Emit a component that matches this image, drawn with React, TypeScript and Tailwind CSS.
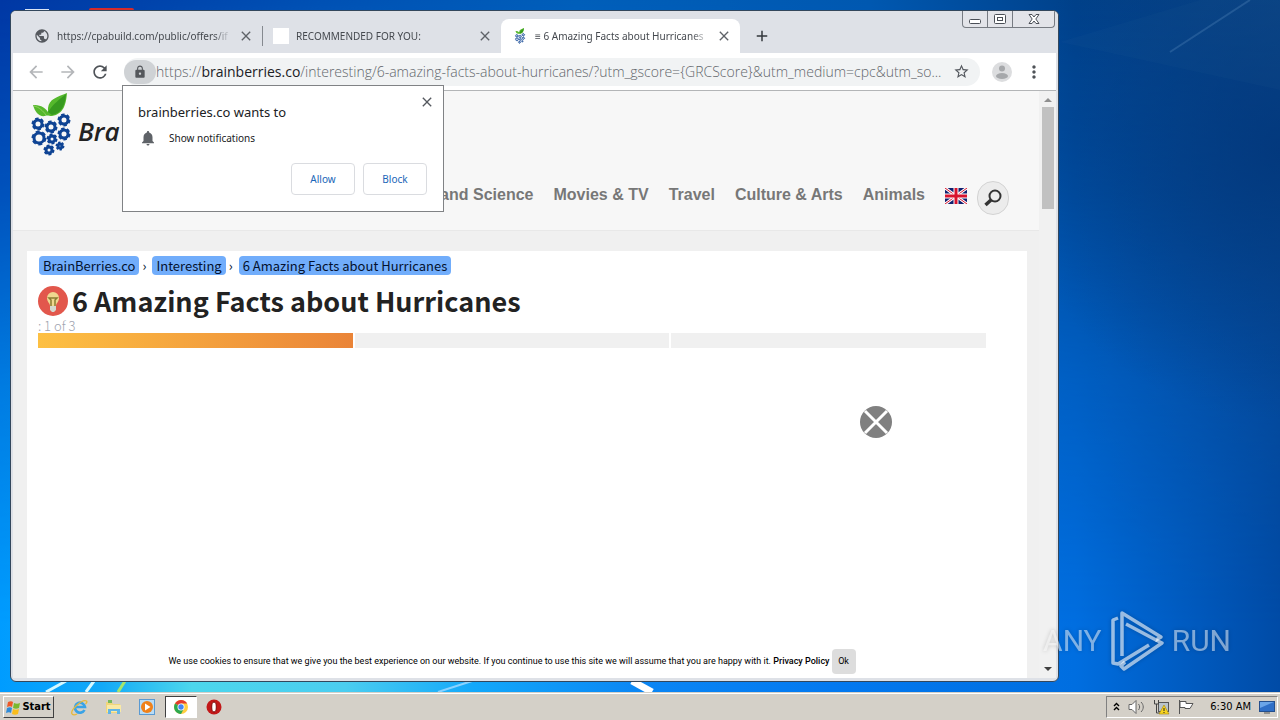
import type { ReactNode } from "react";
import {
  MdAdd,
  MdArrowBack,
  MdArrowForward,
  MdClose,
  MdLock,
  MdMoreVert,
  MdNotifications,
  MdPublic,
  MdRefresh,
  MdStarBorder,
} from "react-icons/md";

const gears = [
  { x: 8, y: 31, r: 5 },
  { x: 21, y: 34, r: 5 },
  { x: 34, y: 27, r: 5 },
  { x: 9, y: 45, r: 6 },
  { x: 34, y: 41, r: 5 },
  { x: 22, y: 46, r: 4 },
  { x: 19, y: 57, r: 4 },
  { x: 30, y: 53, r: 3 },
];

const navItems = ["and Science", "Movies & TV", "Travel", "Culture & Arts", "Animals"];
const crumbs = ["BrainBerries.co", "Interesting", "6 Amazing Facts about Hurricanes"];

function Berry({ className }: { className?: string }) {
  return (
    <svg viewBox="0 0 42 64" className={className} aria-hidden="true">
      <path d="M18 15C19 6 27 4 37 0c-1 11-3 21-15 23-3 0-5-1-7 0C9 24 5 19 3 12c6 0 11 1 15 7Z" fill="#55b82c" />
      <path d="M18 19C23 11 30 6 36 1c-1 11-4 19-14 21Z" fill="#379a1f" />
      <path d="M4 13c5 1 9 5 12 9" stroke="#8fd05c" strokeWidth="1" fill="none" />
      {gears.map((g) => (
        <g key={`${g.x}-${g.y}`} fill="none" stroke="#0f4494">
          <circle cx={g.x} cy={g.y} r={g.r - 1} strokeWidth="3" />
          <circle cx={g.x} cy={g.y} r={g.r + 0.5} strokeWidth="2" pathLength="60" strokeDasharray="6 4" />
        </g>
      ))}
    </svg>
  );
}

function Wallpaper() {
  return (
    <svg viewBox="0 0 1280 692" preserveAspectRatio="none" className="absolute inset-0 size-full" aria-hidden="true">
      <defs>
        <linearGradient id="low">
          <stop offset="0" stopColor="#009cff" />
          <stop offset="0.08" stopColor="#12a9f8" />
          <stop offset="0.15" stopColor="#4cd6ec" />
          <stop offset="0.27" stopColor="#4bcdf0" />
          <stop offset="0.37" stopColor="#13a8fa" />
          <stop offset="0.5" stopColor="#0b86f4" />
          <stop offset="0.65" stopColor="#0379f0" />
          <stop offset="0.84" stopColor="#006ee0" />
          <stop offset="1" stopColor="#004ba6" />
        </linearGradient>
        <linearGradient id="high">
          <stop offset="0" stopColor="#0037a4" />
          <stop offset="0.25" stopColor="#0050b4" />
          <stop offset="0.45" stopColor="#005eba" />
          <stop offset="0.68" stopColor="#0058b0" />
          <stop offset="0.84" stopColor="#00418a" />
          <stop offset="1" stopColor="#0c4788" />
        </linearGradient>
        <linearGradient id="fade" x2="0" y2="1">
          <stop offset="0" stopColor="#fff" />
          <stop offset="0.28" stopColor="#bbb" />
          <stop offset="0.55" stopColor="#555" />
          <stop offset="0.9" stopColor="#000" />
        </linearGradient>
        <mask id="sky">
          <path d="M0 0h1280v692H0z" fill="url(#fade)" />
        </mask>
        <radialGradient id="dim" cx="1280" cy="150" r="270" gradientUnits="userSpaceOnUse">
          <stop offset="0" stopColor="#003478" stopOpacity="0.75" />
          <stop offset="1" stopColor="#003478" stopOpacity="0" />
        </radialGradient>
      </defs>
      <path d="M0 0h1280v692H0z" fill="url(#low)" />
      <path d="M0 0h1280v692H0z" fill="url(#high)" mask="url(#sky)" />
      <path d="M1000 0h280v450h-280z" fill="url(#dim)" />
      <path d="m1170 52 80-52" stroke="#6f9ecb" strokeOpacity="0.25" strokeWidth="2" />
      <path d="M1060 42 1200 0h80v90Z" fill="#5b8fb8" fillOpacity="0.04" />
      <path d="m46 692 20-11M86 692l8-11" stroke="#d5f8ff" strokeWidth="3" />
      <path d="m118 692 7-11" stroke="#a5e66c" strokeWidth="3" />
      <path d="m438 692 34-11" stroke="#8ad2ff" strokeWidth="2" />
      <path d="m632 681 20 11" stroke="#fff" strokeWidth="7" />
      <path d="M25 9.500h24" stroke="#dce6f5" strokeWidth="1" />
      <rect x="89" y="8" width="45" height="8" rx="2" fill="#d52b2b" />
    </svg>
  );
}

function Tab({ icon, title, active }: { icon: ReactNode; title: string; active?: boolean }) {
  return (
    <div
      className={
        active
          ? "flex w-[239px] items-center gap-[7px] rounded-t-lg bg-white pr-2 pl-[11px]"
          : "flex w-[239px] items-center gap-[7px] pr-2 pl-[11px]"
      }
    >
      {icon}
      <span className="flex-1 overflow-hidden mask-r-from-90% text-[10px] whitespace-nowrap text-[#45494f]">{title}</span>
      <button aria-label="Close tab" className="text-[#5f6368]">
        <MdClose size={16} />
      </button>
    </div>
  );
}

function WindowControls() {
  return (
    <div className="flex h-[17px] divide-x divide-[#777b82] rounded-b border border-t-0 border-[#777b82] bg-[#e3e4e9]">
      <button aria-label="Minimize" className="flex w-[25px] items-center justify-center">
        <svg width="12" height="12" viewBox="0 0 12 12">
          <rect x="0.5" y="6.5" width="11" height="4" rx="1" fill="#fff" stroke="#4b4f57" />
        </svg>
      </button>
      <button aria-label="Maximize" className="flex w-[25px] items-center justify-center">
        <svg width="12" height="12" viewBox="0 0 12 12" fill="#fff" stroke="#4b4f57">
          <rect x="0.5" y="1.5" width="11" height="9" rx="1" />
          <rect x="3.5" y="4.5" width="5" height="3" />
        </svg>
      </button>
      <button aria-label="Close" className="flex w-[41px] items-center justify-center">
        <svg width="12" height="12" viewBox="0 0 12 12">
          <path
            d="M1 1.5h3L6 4l2-2.500h3L7.800 6 11 10.500H8L6 8l-2 2.500H1L4.200 6Z"
            fill="#fff"
            stroke="#4b4f57"
          />
        </svg>
      </button>
    </div>
  );
}

function TabStrip() {
  return (
    <div className="flex h-[42px] justify-between bg-[#dee1e7] pr-[3px]">
      <div className="flex pt-2 pl-3">
        <Tab icon={<MdPublic size={16} className="shrink-0 text-[#55595f]" />} title="https://cpabuild.com/public/offers/if" />
        <div className="relative flex">
          <span className="absolute top-[7px] h-5 w-px bg-[#85898f]" />
          <Tab icon={<span className="size-4 shrink-0 bg-white" />} title="RECOMMENDED FOR YOU:" />
        </div>
        <Tab
          active
          icon={<Berry className="h-4 w-4 shrink-0" />}
          title="≡ 6 Amazing Facts about Hurricanes"
        />
        <button aria-label="New tab" className="ml-[13px] text-[#33373c]">
          <MdAdd size={18} />
        </button>
      </div>
      <WindowControls />
    </div>
  );
}

function Toolbar() {
  return (
    <div className="flex h-[38px] items-center border-b border-[#b3b5b7] bg-white pr-3 pl-[13px]">
      <div className="flex gap-3 pr-[14px] text-[#b4b6b9]">
        <button aria-label="Back">
          <MdArrowBack size={20} />
        </button>
        <button aria-label="Forward">
          <MdArrowForward size={20} />
        </button>
        <button aria-label="Reload" className="text-[#4f5358]">
          <MdRefresh size={20} />
        </button>
      </div>
      <div className="flex h-7 min-w-0 flex-1 items-center rounded-full bg-[#f1f3f4]">
        <button aria-label="Site information" className="flex h-6 w-8 shrink-0 items-center justify-center rounded-full bg-[#cfd2d5] text-[#55585c]">
          <MdLock size={14} />
        </button>
        <span className="flex-1 truncate font-['Open_Sans','Noto_Sans',sans-serif] text-[14px] font-light text-[#62666b]">
          https://<span className="font-normal text-[#202124]">brainberries.co</span>
          /interesting/6-amazing-facts-about-hurricanes/?utm_gscore={"{GRCScore}"}&amp;utm_medium=cpc&amp;utm_so...
        </span>
        <button aria-label="Bookmark this page" className="px-[10px] text-[#55595f]">
          <MdStarBorder size={17} />
        </button>
      </div>
      <button aria-label="Profile" className="ml-3">
        <svg width="20" height="20" viewBox="0 0 20 20">
          <circle cx="10" cy="10" r="10" fill="#dcdddf" />
          <circle cx="10" cy="6.500" r="3" fill="#a6a8ab" />
          <ellipse cx="10" cy="14" rx="6" ry="3" fill="#a6a8ab" />
        </svg>
      </button>
      <button aria-label="Menu" className="ml-3 text-[#4f5358]">
        <MdMoreVert size={20} />
      </button>
    </div>
  );
}

function PermissionPrompt() {
  return (
    <div
      role="dialog"
      aria-label="Notification permission"
      className="absolute top-[74px] left-[111px] w-[322px] border border-[#808285] bg-white px-4 pt-4 pb-4 text-[#202124]"
    >
      <button aria-label="Dismiss" className="absolute top-2 right-2 text-[#55595f]">
        <MdClose size={16} />
      </button>
      <p className="-ml-px text-[13px] leading-5">brainberries.co wants to</p>
      <p className="mt-1 flex items-center gap-3 text-[10px] leading-6">
        <MdNotifications size={18} className="text-[#5f6368]" />
        Show notifications
      </p>
      <div className="mt-[13px] flex justify-end gap-2 text-[10px] text-[#1a66b8]">
        <button className="h-8 w-16 rounded border border-[#dadce0]">Allow</button>
        <button className="h-8 w-16 rounded border border-[#dadce0]">Block</button>
      </div>
    </div>
  );
}

function Flag() {
  return (
    <svg width="22" height="16" viewBox="0 0 22 16" aria-label="English">
      <path d="M0 0h22v16H0z" fill="#10206f" />
      <path d="m0 0 22 16M22 0 0 16" stroke="#fff" strokeWidth="3" />
      <path d="m0 0 22 16M22 0 0 16" stroke="#d8142e" strokeWidth="1" />
      <path d="M11 0v16M0 8h22" stroke="#fff" strokeWidth="5" />
      <path d="M11 0v16M0 8h22" stroke="#d8142e" strokeWidth="3" />
    </svg>
  );
}

function SiteHeader() {
  return (
    <header className="flex h-[140px] flex-col justify-between border-b border-[#e8e8e8] bg-[#f7f7f7] pr-[30px] pb-[15px] pl-[17px]">
      <a href="#home" className="flex items-center gap-1.5 pt-0.5">
        <Berry className="h-16 w-[42px]" />
        <span className="pt-3 font-['Open_Sans','Noto_Sans',sans-serif] text-[26px] font-semibold text-[#222] italic">Bra</span>
      </a>
      <nav className="flex justify-end gap-5 font-['Liberation_Sans',Arial,sans-serif] text-[16px] leading-7 font-bold whitespace-nowrap text-[#777]">
        {navItems.map((item) => (
          <a key={item} href="#nav">
            {item}
          </a>
        ))}
        <div className="flex gap-[10px]">
          <a href="#english" className="flex h-[30px] items-center">
            <Flag />
          </a>
          <button aria-label="Search" className="flex h-[34px] w-8 items-center justify-center rounded-full border border-[#d3d3d3] bg-[#ececec]">
            <svg width="18" height="18" viewBox="0 0 18 18" fill="none" stroke="#333">
              <circle cx="11" cy="7" r="5.500" strokeWidth="2" />
              <path d="m7 11-5.500 5" strokeWidth="3.500" />
            </svg>
          </button>
        </div>
      </nav>
    </header>
  );
}

function Article() {
  return (
    <main className="mt-5 mr-3 ml-[14px] flex flex-1 flex-col bg-white pt-[5px] pl-[11px]">
      <div className="flex gap-[3px] pl-px font-['Noto_Sans_CJK_SC',sans-serif] text-[13px] leading-[19px] text-[#04122e]">
        {crumbs.map((crumb, i) => (
          <div key={crumb} className="flex gap-[3px]">
            {i > 0 && <span className="w-[7px]">›</span>}
            <a href="#crumb" className="rounded-sm bg-[#71adfb] px-1">
              {crumb}
            </a>
          </div>
        ))}
      </div>
      <h1 className="mt-2 flex items-center gap-1 font-['Noto_Sans_CJK_SC',sans-serif] text-[27px] leading-9 font-bold text-[#222]">
        <svg width="30" height="30" viewBox="0 0 30 30" aria-hidden="true">
          <circle cx="15" cy="15" r="15" fill="#e2574c" />
          <path d="M9 12a6 6 0 0 1 12 0c0 4-3 5-3 8h-6c0-3-3-4-3-8Z" fill="#efd78f" />
          <path d="M13 20v-6l-2-2h8l-2 2v6" fill="none" stroke="#8a7c33" strokeWidth="1.500" />
          <path d="M12 20h6v4l-2 2h-2l-2-2Z" fill="#d5d8d0" />
        </svg>
        6 Amazing Facts about Hurricanes
      </h1>
      <p className="font-['Noto_Sans_CJK_SC',sans-serif] text-[13px] leading-[14px] font-light text-[#a0a4b0]">: 1 of 3</p>
      <div className="mr-[41px] flex h-[15px] gap-0.5">
        <div className="flex-1 bg-linear-to-r from-[#fdc043] to-[#ea8438]" />
        <div className="flex-1 bg-[#f0f0f0]" />
        <div className="flex-1 bg-[#f0f0f0]" />
      </div>
      <div className="mt-[58px] mr-[135px] flex justify-end">
        <button aria-label="Close advertisement">
          <svg width="32" height="32" viewBox="0 0 32 32">
            <circle cx="16" cy="16" r="16" fill="#808080" />
            <path d="m5 5 22 22M27 5 5 27" stroke="#fff" strokeWidth="3" />
          </svg>
        </button>
      </div>
      <div className="mt-auto mr-[41px] flex items-center justify-center gap-0.5 pb-1 font-['Roboto','Noto_Sans',sans-serif] text-[9px] text-black">
        <span>
          We use cookies to ensure that we give you the best experience on our website. If you continue to use this site we will assume
          that you are happy with it.{" "}
          <a href="#privacy" className="font-medium">
            Privacy Policy
          </a>
        </span>
        <button className="h-[25px] w-6 rounded-sm bg-[#ddd]">Ok</button>
      </div>
    </main>
  );
}

function Scrollbar() {
  return (
    <div className="flex w-[17px] flex-col items-center bg-[#f1f1f1] pt-[7px] pb-[7px]">
      <svg width="8" height="4" viewBox="0 0 8 4">
        <path d="m0 4 4-4 4 4Z" fill="#8f8f8f" />
      </svg>
      <div className="mt-[5px] h-[102px] w-3 bg-[#c1c1c1]" />
      <svg width="8" height="4" viewBox="0 0 8 4" className="mt-auto">
        <path d="m0 0 4 4 4-4Z" fill="#404040" />
      </svg>
    </div>
  );
}

function BrowserWindow() {
  return (
    <div className="absolute top-[10px] right-[221px] bottom-[10px] left-[10px] flex flex-col overflow-hidden rounded-md border border-[#33475c] bg-[#dee1e7]">
      <TabStrip />
      <div className="flex min-h-0 flex-1 flex-col pr-0.5 pb-[3px] pl-0.5">
        <Toolbar />
        <div className="flex min-h-0 flex-1">
          <div className="flex min-w-0 flex-1 flex-col bg-[#f0f0f0]">
            <SiteHeader />
            <Article />
          </div>
          <Scrollbar />
        </div>
      </div>
      <PermissionPrompt />
    </div>
  );
}

function Watermark() {
  return (
    <div className="absolute right-[49px] bottom-5 flex items-center gap-2 font-['Roboto','Liberation_Sans',sans-serif] text-[30px] leading-none text-white/50 drop-shadow-[0_0_2px_rgba(0,0,0,0.35)]">
      ANY
      <svg width="54" height="62" viewBox="0 0 54 62" fill="none" stroke="#fff" strokeOpacity="0.6" strokeWidth="3.500" strokeLinejoin="round">
        <path d="M8 8 3 10v43l5 1 31-19" />
        <path d="M12 46V3l39 24-5 3-30-16" />
        <path d="m46 30 6 3-38 26-3-3 4-4" />
      </svg>
      RUN
    </div>
  );
}

function ChromeIcon() {
  return (
    <svg width="16" height="16" viewBox="0 0 16 16">
      <circle cx="8" cy="8" r="7" fill="#ffce41" />
      <path d="M8 8 2 4.500a7 7 0 0 1 12.200 0L8 4.500Z" fill="#e33b2e" />
      <path d="M8 8 2 4.500A7 7 0 0 0 8 15l3-5.500Z" fill="#2da94f" />
      <circle cx="8" cy="8" r="3.500" fill="#fff" />
      <circle cx="8" cy="8" r="2.700" fill="#4285f4" />
    </svg>
  );
}

function Taskbar() {
  return (
    <footer className="flex h-7 shrink-0 items-center justify-between border-t border-[#d4d0c8] bg-[#d4d0c8] pt-px pr-0.5 pl-[3px] font-['DejaVu_Sans_Condensed','DejaVu_Sans',sans-serif] text-[11px] text-black shadow-[inset_0_1px_#fff]">
      <div className="flex h-[22px] items-center">
        <button className="flex h-full w-[51px] items-center justify-center gap-px border border-t-white border-r-[#404040] border-b-[#404040] border-l-white font-bold">
          <svg width="15" height="15" viewBox="0 0 15 15" aria-hidden="true">
            <path d="M2 2c2-1 4-1 5 0L6 7C5 6 3 6 1 7Z" fill="#ef5826" />
            <path d="M8 3c2 1 4 1 6 0l-1 5c-2 1-4 1-6 0Z" fill="#7ab82e" />
            <path d="M1 8c2-1 4-1 5 0l-1 5c-1-1-3-1-5 0Z" fill="#2f8bd8" />
            <path d="M7 9c2 1 4 1 6 0l-1 5c-2 1-4 1-6 0Z" fill="#f9bd1c" />
          </svg>
          Start
        </button>
        <div className="flex h-full items-center pl-[17px]">
          <button aria-label="Internet Explorer">
            <svg width="17" height="17" viewBox="0 0 17 17" fill="none">
              <path d="M13.500 11A5 5 0 1 1 14 8H5" stroke="#3aa3e6" strokeWidth="2.600" />
              <path d="M1 15C-1 11 11 0 15.500 2c1 1 0 2-1 3M1 15c1 1 3 1 5 0" stroke="#e7b93a" strokeWidth="1.300" />
            </svg>
          </button>
          <button aria-label="Explorer" className="ml-[17px]">
            <svg width="17" height="17" viewBox="0 0 17 17">
              <path d="M1 3h6l1 2h7v9H1Z" fill="#f0d67b" />
              <path d="M3 1h4v3H3z" fill="#78b95a" />
              <path d="M2 6h14v7H2z" fill="#f9e9a5" />
              <path d="M3 15v-5h12v5h-3v-3H6v3Z" fill="#62b5e5" />
            </svg>
          </button>
          <button aria-label="Media Player" className="ml-[17px]">
            <svg width="17" height="17" viewBox="0 0 17 17">
              <rect x="0.500" y="0.500" width="15" height="15" fill="#b9dcf5" stroke="#5a9ad2" />
              <circle cx="8" cy="8" r="6" fill="#f08119" />
              <path d="m6 4.500 5.500 3.500L6 11.500Z" fill="#fff" />
            </svg>
          </button>
          <button
            aria-label="Chrome"
            className="ml-[9px] flex h-[22px] w-8 items-center justify-center border border-t-[#404040] border-r-white border-b-white border-l-[#404040] bg-white"
          >
            <ChromeIcon />
          </button>
          <button aria-label="Opera" className="ml-[9px]">
            <svg width="16" height="16" viewBox="0 0 16 16">
              <circle cx="8" cy="8" r="7.500" fill="#c21818" />
              <ellipse cx="8" cy="8" rx="2.300" ry="5" fill="#fff" stroke="#7c0808" />
            </svg>
          </button>
        </div>
      </div>
      <div className="flex h-[22px] items-center border border-t-[#808080] border-r-white border-b-white border-l-[#808080] pr-0.5 pl-1.5">
        <svg width="7" height="10" viewBox="0 0 7 10" fill="none" stroke="#000" strokeWidth="1.400">
          <path d="m1 4 2.500-2.500L6 4M1 8l2.500-2.500L6 8" />
        </svg>
        <svg width="17" height="16" viewBox="0 0 17 16" fill="#fff" stroke="#666" className="ml-2">
          <path d="M1 5.500h3l4-4v13l-4-4H1Z" />
          <path d="M10.500 5c1.500 2 1.500 4 0 6M13 3c3 3 3 7 0 10" fill="none" />
        </svg>
        <svg width="17" height="16" viewBox="0 0 17 16" className="ml-2">
          <rect x="5.500" y="3.500" width="10" height="9" fill="#b9c3cb" stroke="#555" />
          <path d="M1.500 1v4h4V1M3.500 5v9h4" fill="none" stroke="#444" />
          <path d="m11 6 5 9H6Z" fill="#f8d421" stroke="#a58405" strokeWidth="0.600" />
          <path d="M11 9v3m0 1v1" stroke="#222" />
        </svg>
        <svg width="16" height="16" viewBox="0 0 16 16" fill="#fff" stroke="#555" className="ml-2">
          <path d="M1.500 1v14M2 2.500h6v2h7l-3 5H7v-1H2Z" />
        </svg>
        <time className="ml-4">6:30 AM</time>
        <svg width="16" height="14" viewBox="0 0 16 14" className="ml-2">
          <rect x="0.500" y="1.500" width="15" height="10" fill="#2f6fc7" stroke="#244f8d" />
          <path d="M1 2h14L1 8Z" fill="#6ba5e8" />
          <path d="M5 13h6" stroke="#555" />
        </svg>
      </div>
    </footer>
  );
}

export default function App() {
  return (
    <div className="flex h-screen flex-col overflow-hidden font-['Noto_Sans','Open_Sans',sans-serif]">
      <div className="relative min-h-0 flex-1">
        <Wallpaper />
        <BrowserWindow />
        <Watermark />
      </div>
      <Taskbar />
    </div>
  );
}
